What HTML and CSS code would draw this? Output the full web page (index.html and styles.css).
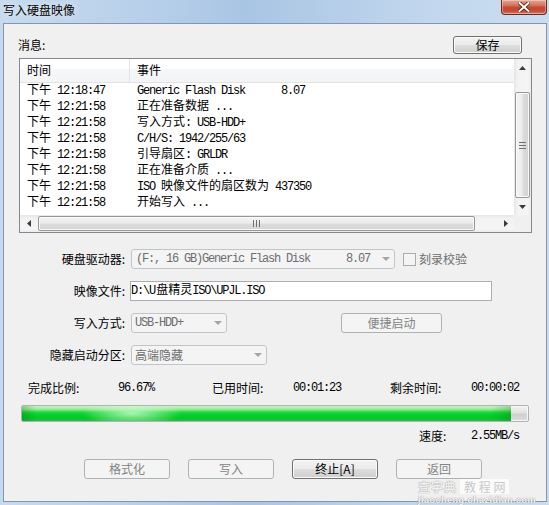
FILE: index.html
```html
<!DOCTYPE html>
<html lang="zh-CN">
<head>
<meta charset="utf-8">
<title>写入硬盘映像</title>
<link rel="stylesheet" href="styles.css">
</head>
<body>
<div class="window">
  <div class="titlebar">
    <span class="title">写入硬盘映像</span>
    <div class="close">
      <svg width="12" height="10" viewBox="0 0 12 10"><path d="M1.5 1 L10.5 9 M10.5 1 L1.5 9" stroke="#5a1a12" stroke-width="3.6" stroke-linecap="square"/><path d="M1.5 1 L10.5 9 M10.5 1 L1.5 9" stroke="#fff" stroke-width="2" stroke-linecap="square"/></svg>
    </div>
  </div>
  <div class="client">
    <div class="msg-head"><span>消息:</span><button class="btn btn-save">保存</button></div>

    <div class="listview">
      <div class="lv-main">
        <div class="lv-header"><div class="c1">时间</div><div class="c2">事件</div></div>
        <div class="lv-row"><span class="c1"><i class="cn">下午</i> 12:18:47</span><span class="c2">Generic Flash Disk      8.07</span></div>
        <div class="lv-row"><span class="c1"><i class="cn">下午</i> 12:21:58</span><span class="c2"><i class="cn">正在准备数据</i> ...</span></div>
        <div class="lv-row"><span class="c1"><i class="cn">下午</i> 12:21:58</span><span class="c2"><i class="cn">写入方式</i>: USB-HDD+</span></div>
        <div class="lv-row"><span class="c1"><i class="cn">下午</i> 12:21:58</span><span class="c2">C/H/S: 1942/255/63</span></div>
        <div class="lv-row"><span class="c1"><i class="cn">下午</i> 12:21:58</span><span class="c2"><i class="cn">引导扇区</i>: GRLDR</span></div>
        <div class="lv-row"><span class="c1"><i class="cn">下午</i> 12:21:58</span><span class="c2"><i class="cn">正在准备介质</i> ...</span></div>
        <div class="lv-row"><span class="c1"><i class="cn">下午</i> 12:21:58</span><span class="c2">ISO <i class="cn">映像文件的扇区数为</i> 437350</span></div>
        <div class="lv-row"><span class="c1"><i class="cn">下午</i> 12:21:58</span><span class="c2"><i class="cn">开始写入</i> ...</span></div>
      </div>
      <div class="vscroll">
        <div class="arrow"><svg width="7" height="4" viewBox="0 0 7 4"><path d="M0 4 L3.5 0 L7 4 Z" fill="#3c3c3c"/></svg></div>
        <div class="vtrack">
          <div class="vthumb"><span class="grip-v"></span></div>
        </div>
        <div class="arrow"><svg width="7" height="4" viewBox="0 0 7 4"><path d="M0 0 L3.5 4 L7 0 Z" fill="#3c3c3c"/></svg></div>
      </div>
      <div class="hscroll">
        <div class="arrow"><svg width="4" height="7" viewBox="0 0 4 7"><path d="M4 0 L0 3.5 L4 7 Z" fill="#3c3c3c"/></svg></div>
        <div class="htrack">
          <div class="hthumb"><span class="grip-h"></span></div>
        </div>
        <div class="arrow"><svg width="4" height="7" viewBox="0 0 4 7"><path d="M0 0 L4 3.5 L0 7 Z" fill="#3c3c3c"/></svg></div>
      </div>
      <div class="corner"></div>
    </div>

    <div class="form">
      <label class="lbl">硬盘驱动器:</label>
      <div class="ctl">
        <div class="combo combo-drive"><span class="val">(F:, 16 GB)Generic Flash Disk      8.07</span><span class="caret"></span></div>
        <span class="chk"></span><span class="chk-lbl">刻录校验</span>
      </div>

      <label class="lbl">映像文件:</label>
      <div class="ctl">
        <div class="input"><span class="val">D:\<i class="cn">U盘精灵</i>ISO\UPJL.ISO</span></div>
      </div>

      <label class="lbl">写入方式:</label>
      <div class="ctl">
        <div class="combo combo-mode"><span class="val">USB-HDD+</span><span class="caret"></span></div>
        <button class="btn btn-off btn-quick">便捷启动</button>
      </div>

      <label class="lbl">隐藏启动分区:</label>
      <div class="ctl">
        <div class="combo combo-hide"><span class="val-cn">高端隐藏</span><span class="caret"></span></div>
      </div>
    </div>

    <div class="stats">
      <span>完成比例:</span><span class="num">96.67%</span>
      <span>已用时间:</span><span class="num">00:01:23</span>
      <span>剩余时间:</span><span class="num">00:00:02</span>
    </div>

    <div class="progress"><div class="fill" style="width:96.67%"></div></div>

    <div class="speed"><span class="speed-lbl">速度:</span><span class="num">2.55MB/s</span></div>

    <div class="actions">
      <button class="btn btn-off">格式化</button>
      <button class="btn btn-off">写入</button>
      <button class="btn btn-on">终止[A]</button>
      <button class="btn btn-off">返回</button>
    </div>

    <div class="watermark">
      <div class="wm-top"><span class="wm-big">查字典</span><span class="wm-box">教 程 网</span></div>
      <div class="wm-url">jiaocheng.chazidian.com</div>
    </div>
  </div>
</div>
</body>
</html>
```
FILE: styles.css
```css
* { box-sizing: border-box; }
html, body { margin: 0; padding: 0; }
body {
  width: 549px;
  height: 505px;
  overflow: hidden;
  background: #bcd3ea;
  font: 12px/1.2 "Noto Sans CJK SC", "Liberation Sans", sans-serif;
  color: #000;
}
/* CJK runs inside monospace text: same font stack (CJK glyphs come from fallback), no negative tracking */
.cn { font-style: normal; font-family: inherit; letter-spacing: 0; }

.window {
  width: 549px;
  height: 505px;
  display: flex;
  flex-direction: column;
  background: linear-gradient(to right, #c6daef 0%, #b9d0ea 25%, #a9c5e4 45%, #b4cde8 60%, #c3d8ee 80%, #cadcef 100%);
}

/* Title bar */
.titlebar {
  height: 23px;
  flex: none;
  display: flex;
  align-items: flex-start;
  padding-left: 3px;
}
.title {
  font-size: 12px;
  line-height: 14px;
  margin-top: 3px;
  color: #000;
  text-shadow: 0 0 6px rgba(255,255,255,0.9);
}
.close {
  margin-left: auto;
  margin-right: 2px;
  width: 46px;
  height: 15px;
  border: 1px solid #6d2a20;
  border-top: none;
  border-radius: 0 0 4px 4px;
  background: linear-gradient(#e4a393 0%, #d37a66 35%, #c4472f 55%, #c64e35 80%, #d9806a 100%);
  display: flex;
  align-items: center;
  justify-content: center;
  box-shadow: inset 0 0 0 1px rgba(255,255,255,0.35);
}

/* Client area */
.client {
  flex: 1;
  margin: 0 2px 3px 3px;
  border: 1px solid #8496ad;
  background: #f0f0f0;
  position: relative;
  padding: 12px 0 0 15px;
}

.msg-head {
  display: flex;
  align-items: center;
  justify-content: space-between;
  width: 504px;
  height: 18px;
  margin-left: -1px;
  font-size: 12px;
}

.btn {
  font: 12px/16px "Noto Sans CJK SC", sans-serif;
  padding: 0;
  border-radius: 3px;
  cursor: default;
}
.btn-save, .btn-on {
  border: 1px solid #707070;
  background: linear-gradient(#f2f2f2 0%, #ebebeb 48%, #dddddd 52%, #cfcfcf 100%);
  box-shadow: inset 0 0 0 1px #fbfbfb;
  color: #000;
}
.btn-save { width: 69px; height: 18px; }
.btn-off {
  border: 1px solid #adb2b5;
  background: #f4f4f4;
  color: #838383;
}

/* List view */
.listview {
  margin-top: 4px;
  width: 513px;
  height: 175px;
  border: 1px solid #828790;
  background: #fff;
  display: grid;
  grid-template-columns: 1fr 17px;
  grid-template-rows: 1fr 17px;
}
.lv-main { overflow: hidden; }
.lv-header {
  height: 24px;
  display: flex;
  background: linear-gradient(#ffffff 0%, #ffffff 42%, #f6f7f9 44%, #f3f4f6 100%);
  border-bottom: 1px solid #e2e3e5;
  font-size: 12px;
}
.lv-header .c1 {
  width: 110px;
  padding-left: 7px;
  border-right: 1px solid #e2e3e5;
  display: flex;
  align-items: center;
}
.lv-header .c2 {
  padding-left: 7px;
  display: flex;
  align-items: center;
}
.lv-row {
  display: flex;
  height: 16px;
  white-space: pre;
  font: 12px/16px "Liberation Mono", "Noto Sans CJK SC", monospace;
  letter-spacing: -1.2px;
}
.lv-row .c1 { width: 110px; padding-left: 7px; }
.lv-row .c2 { padding-left: 7px; }

.arrow {
  width: 17px;
  height: 17px;
  flex: none;
  display: flex;
  align-items: center;
  justify-content: center;
}
.vscroll {
  grid-row: 1;
  grid-column: 2;
  display: flex;
  flex-direction: column;
  background: linear-gradient(to right, #e6e6e6 0%, #f2f2f2 20%, #f5f5f5 80%, #ececec 100%);
}
.vtrack {
  flex: 1;
  display: flex;
  flex-direction: column;
  justify-content: flex-end;
  padding: 0 1px;
}
.vthumb {
  height: 106px;
  border: 1px solid #979797;
  border-radius: 2px;
  background: linear-gradient(to right, #f4f4f4 0%, #ececec 45%, #dcdcdc 55%, #d3d3d3 100%);
  box-shadow: inset 0 0 0 1px #fafafa;
  display: flex;
  align-items: center;
  justify-content: center;
}
.grip-v {
  width: 7px;
  height: 7px;
  background: repeating-linear-gradient(#6f6f6f 0 1px, transparent 1px 3px);
}
.hscroll {
  grid-row: 2;
  grid-column: 1;
  display: flex;
  background: linear-gradient(#e6e6e6 0%, #f2f2f2 20%, #f5f5f5 80%, #ececec 100%);
}
.htrack {
  flex: 1;
  padding: 1px 0 1px 1px;
}
.hthumb {
  width: 437px;
  height: 100%;
  border: 1px solid #979797;
  border-radius: 2px;
  background: linear-gradient(#f4f4f4 0%, #ececec 45%, #dcdcdc 55%, #d3d3d3 100%);
  box-shadow: inset 0 0 0 1px #fafafa;
  display: flex;
  align-items: center;
  justify-content: center;
}
.grip-h {
  width: 7px;
  height: 7px;
  background: repeating-linear-gradient(to right, #6f6f6f 0 1px, transparent 1px 3px);
}
.corner { grid-row: 2; grid-column: 2; background: #f0f0f0; }

/* Form */
.form {
  margin-top: 16px;
  display: grid;
  grid-template-columns: 106px auto;
  column-gap: 6px;
  row-gap: 12px;
}
.lbl {
  text-align: right;
  line-height: 20px;
  font-size: 12px;
  white-space: nowrap;
}
.ctl {
  display: flex;
  align-items: center;
  height: 20px;
}
.val {
  white-space: pre;
  font: 12px/18px "Liberation Mono", "Noto Sans CJK SC", monospace;
  letter-spacing: -1.2px;
}
.val-cn { font: 12px/18px "Noto Sans CJK SC", sans-serif; }
.combo {
  height: 20px;
  border: 1px solid #c2c5c8;
  border-radius: 3px;
  background: #f4f4f4;
  display: flex;
  align-items: center;
  padding-left: 4px;
  color: #6d6d6d;
}
.caret {
  margin-left: auto;
  margin-right: 4px;
  width: 0;
  height: 0;
  border-left: 4px solid transparent;
  border-right: 4px solid transparent;
  border-top: 4px solid #a4a4a4;
}
.combo-drive { width: 264px; }
.combo-mode { width: 96px; padding-left: 3px; }
.combo-hide { width: 136px; padding-left: 3px; }
.chk {
  margin-left: 8px;
  width: 13px;
  height: 13px;
  border: 1px solid #a9abae;
  background: #f4f4f4;
}
.chk-lbl { margin-left: 3px; color: #6d6d6d; font-size: 12px; }
.input {
  margin-left: -1px;
  width: 362px;
  height: 20px;
  border: 1px solid #abadb3;
  background: #fff;
  display: flex;
  align-items: center;
  color: #000;
}
.btn-quick { margin-left: 114px; width: 101px; height: 20px; }

/* Stats */
.num {
  white-space: pre;
  font: 12px/16px "Liberation Mono", monospace;
  letter-spacing: -1.2px;
}
.stats {
  margin-top: 15px;
  margin-left: 9px;
  display: grid;
  grid-template-columns: 90px 94px 81px 97px 81px auto;
  line-height: 16px;
  height: 16px;
  font-size: 12px;
}
.progress {
  margin-top: 9px;
  margin-left: 2px;
  width: 508px;
  height: 17px;
  border: 1px solid #b2b2b2;
  border-radius: 2px;
  background: linear-gradient(#f3f3f3 0%, #e2e2e2 45%, #d0d0d0 55%, #dcdcdc 100%);
  box-shadow: inset 0 0 0 1px #f8f8f8;
  overflow: hidden;
}
.fill {
  height: 100%;
  background:
    radial-gradient(ellipse 50px 12px at 110px 50%, rgba(220,255,220,0.75), rgba(220,255,220,0) 100%),
    linear-gradient(to right, rgba(0,80,0,0.25) 0, rgba(0,80,0,0) 14px),
    linear-gradient(to left, rgba(0,80,0,0.2) 0, rgba(0,80,0,0) 20px),
    linear-gradient(#c8f5c4 0%, #9ae998 22%, #1fd640 42%, #00d02a 60%, #03c828 80%, #2dbb47 100%);
}
.speed {
  margin-top: 6px;
  padding-left: 400px;
  display: flex;
  line-height: 16px;
  height: 16px;
}
.speed-lbl { width: 52px; font-size: 12px; }

.actions {
  margin-top: 15px;
  margin-left: 65px;
  display: flex;
  gap: 18px;
}
.actions .btn { width: 86px; height: 20px; line-height: 18px; }

/* Watermark overlay */
.watermark {
  position: absolute;
  left: 414px;
  top: 455px;
  width: 126px;
  pointer-events: none;
  display: flex;
  flex-direction: column;
  gap: 2px;
}
.wm-top { display: flex; align-items: center; height: 15px; }
.wm-big {
  font: 700 12px/15px "Noto Sans CJK SC", sans-serif;
  letter-spacing: 1px;
  color: rgba(255,255,255,0.85);
  text-shadow: 0 0 1px #a0a0a0, 0 0 1px #a0a0a0;
}
.wm-box {
  margin-left: 3px;
  padding: 0 4px;
  height: 15px;
  font: 12px/15px "Noto Sans CJK SC", sans-serif;
  color: #c8c8c8;
  background: rgba(255,255,255,0.7);
}
.wm-url {
  font: 700 9px/9px "Liberation Sans", sans-serif;
  color: rgba(255,255,255,0.9);
  text-shadow: 0 0 1px #9a9a9a, 0 0 1px #9a9a9a;
  letter-spacing: 0.5px;
}
```
